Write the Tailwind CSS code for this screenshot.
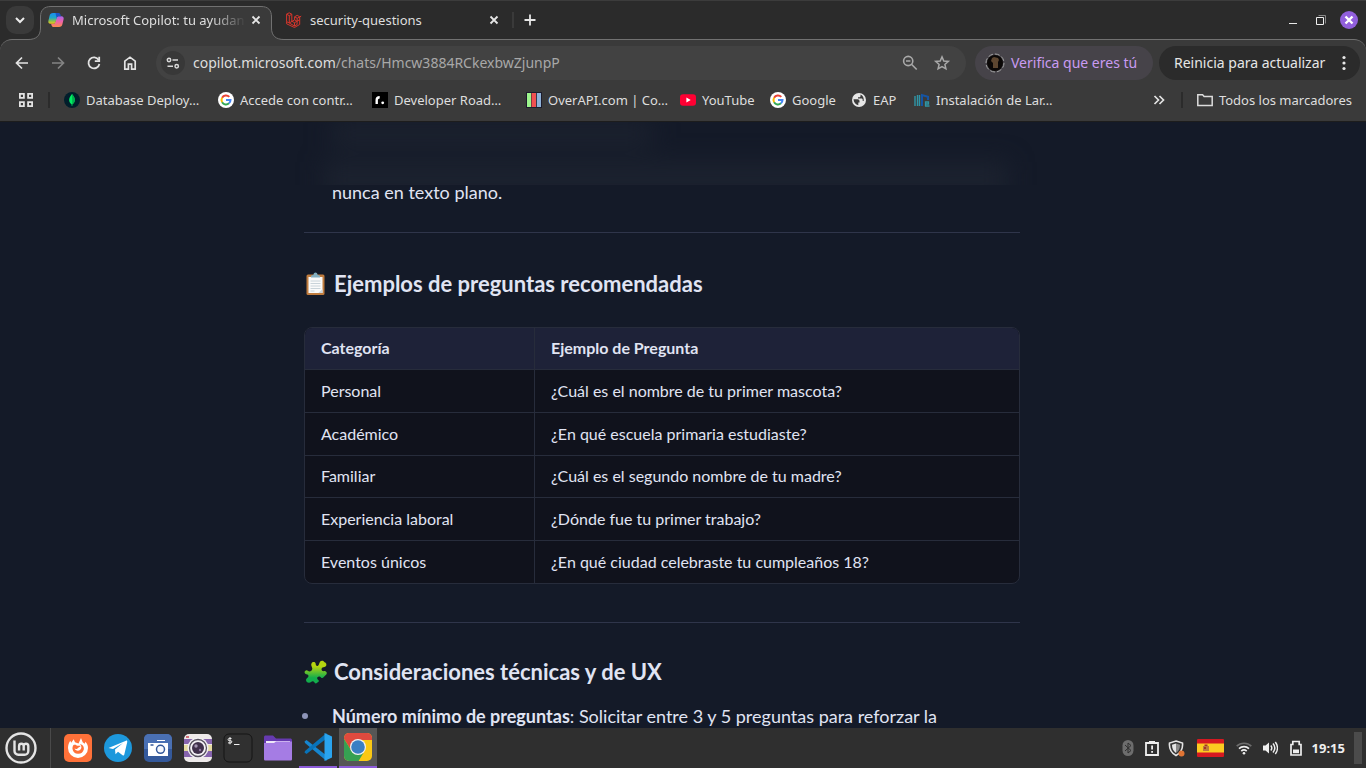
<!DOCTYPE html>
<html lang="es">
<head>
<meta charset="utf-8">
<title>Microsoft Copilot: tu ayudante</title>
<script src="https://cdn.jsdelivr.net/npm/@tailwindcss/browser@4"></script>
</head>
<body class="flex h-screen flex-col overflow-hidden bg-[#141a28] font-['Noto_Sans',sans-serif] text-[13px] leading-5 text-[#dedede]">

<header class="shrink-0 bg-[#2b2b2b]">
  <!-- Tab strip -->
  <div class="relative z-10 flex h-10 items-start border-t border-[#3c3c3c] pr-2">
    <button aria-label="Buscar pestañas" class="mt-[5px] ml-1.5 flex size-7 items-center justify-center rounded-[10px] bg-[#3a3a3a]">
      <svg class="size-4" viewBox="0 0 16 16" fill="none" stroke="#ececec" stroke-width="2"><path d="M4 6l4 4 4-4"/></svg>
    </button>
    <div class="relative ml-1.5 mt-[5px] flex h-[35px] w-[232px] items-center pl-2 pr-2 pb-2">
      <svg class="absolute -left-3 top-0 h-[35px] w-[256px]" viewBox="0 0 256 35" fill="none"><path d="M0 33.500C8 33.500 12.500 30 12.500 22V11C12.500 4 16 .5 23 .5H233C240 .5 243.500 4 243.500 11V22C243.500 30 248 33.500 256 33.500V35H0Z" fill="#3a3a3a"/><path d="M0 33.500C8 33.500 12.500 30 12.500 22V11C12.500 4 16 .5 23 .5H233C240 .5 243.500 4 243.500 11V22C243.500 30 248 33.500 256 33.500" stroke="#717171"/></svg>
      <svg class="relative size-4 shrink-0" viewBox="0 0 16 16">
        <defs>
          <linearGradient id="c1" x1="0" y1="0" x2="0" y2="1"><stop stop-color="#1a8ff0"/><stop offset=".45" stop-color="#20a8c8"/><stop offset=".75" stop-color="#8fc04a"/><stop offset="1" stop-color="#f5c518"/></linearGradient>
          <linearGradient id="c2" x1="0" y1="0" x2="0" y2="1"><stop stop-color="#a565ee"/><stop offset=".5" stop-color="#ee62a8"/><stop offset="1" stop-color="#fb8a4c"/></linearGradient>
        </defs>
        <path d="M11 15H5.500c-1 0-1.600-.6-1.900-1.500l-.5-1.700h2.200c1 0 1.500-.6 1.800-1.600L8.500 6c.4-1.300 1.200-1.800 2.500-1.800h2.500c1.700 0 2.500 1.300 2.100 3.100l-1.200 5C14 14 13 15 11 15z" fill="url(#c2)"/>
        <path d="M5 1h5.500L7.500 10c-.4 1.300-1.200 1.800-2.500 1.800H2.500C.8 11.800 0 10.500.4 8.700l1.200-5C2 2 3 1 5 1z" fill="url(#c1)"/>
        <path d="M7.500 1h3c1 0 1.600.6 1.900 1.500l.5 1.700H11c-1.300 0-2 .5-2.500 1.800z" fill="#1c55c8"/>
      </svg>
      <span class="relative ml-2 w-[174px] whitespace-nowrap mask-r-from-80% mask-r-to-100%">Microsoft Copilot: tu ayudan</span>
      <button aria-label="Cerrar pestaña" class="relative ml-auto size-4 shrink-0"><svg viewBox="0 0 16 16" stroke="#e6e6e6" stroke-width="1.800"><path d="M4.500 4.500l7 7M11.500 4.500l-7 7"/></svg></button>
    </div>
    <div class="mt-[5px] ml-3.5 flex h-7 w-[216px] items-center">
      <svg class="size-4 shrink-0" viewBox="0 0 16 16" fill="none" stroke="#d5362c" stroke-width="1" stroke-linejoin="round"><path d="M.6 2.200L3.200.8l2.600 1.400v7l2.700 1.500 5.200-3V4.800l-2.500-1.500-2.600 1.500v3L3.300 11 .6 9.600zM.6 2.200l2.700 1.500 2.500-1.500M3.300 3.700V11l5.200 3 2.600-1.500V9.300M8.600 4.800l2.600 1.500 4-2.200M11.200 6.300v3M8.500 10.700V14M8.600 7.800l2.600 1.500M.6 9.600v2.200L8.500 15.500l5.200-3v-5"/></svg>
      <span class="ml-2">security-questions</span>
      <button aria-label="Cerrar pestaña" class="ml-auto size-4"><svg viewBox="0 0 16 16" stroke="#e6e6e6" stroke-width="1.800"><path d="M4.500 4.500l7 7M11.500 4.500l-7 7"/></svg></button>
    </div>
    <span class="mt-[11px] ml-2.5 h-4 w-0.5 bg-[#3a3a3a]"></span>
    <button aria-label="Nueva pestaña" class="mt-[11px] ml-2 size-4"><svg viewBox="0 0 16 16" stroke="#e6e6e6" stroke-width="1.800"><path d="M8 2.500v11M2.500 8h11"/></svg></button>
    <div class="mt-2.5 ml-auto flex items-center gap-2.5">
      <button aria-label="Minimizar" class="size-[18px]"><svg viewBox="0 0 18 18"><path d="M5 12.500h8" stroke="#e8e8e8"/></svg></button>
      <button aria-label="Restaurar" class="size-[18px]"><svg viewBox="0 0 18 18" fill="none"><path d="M6.500 4.500h7v8" stroke="#888"/><path d="M4.500 6.500h7v7h-7z" stroke="#eee"/></svg></button>
      <button aria-label="Cerrar" class="size-[18px] rounded-full bg-[#915fdc]"><svg viewBox="0 0 18 18" stroke="#fff" stroke-width="2.400"><path d="M5.500 5.500l7 7M12.500 5.500l-7 7"/></svg></button>
    </div>
  </div>

  <div class="-mt-px rounded-t-xl border-t border-[#717171] bg-[#3a3a3a]">
    <!-- Toolbar -->
    <div class="flex items-center pt-1.5 pr-1.5 pl-3">
      <div class="flex w-36 items-center gap-4">
        <button aria-label="Atrás" class="size-5"><svg viewBox="0 0 20 20" fill="none" stroke="#e3e3e3" stroke-width="1.700"><path d="M16 10H5M10 4.500L4.500 10l5.500 5.500"/></svg></button>
        <button aria-label="Adelante" class="size-5"><svg viewBox="0 0 20 20" fill="none" stroke="#848484" stroke-width="1.700"><path d="M4 10h11M10 4.500l5.500 5.500-5.500 5.500"/></svg></button>
        <button aria-label="Recargar" class="size-5"><svg viewBox="0 0 20 20" fill="none" stroke="#e3e3e3" stroke-width="1.800"><path d="M14.700 7A5.500 5.500 0 1 0 15.400 11"/><path d="M15.200 3.800v4.400h-4.400"/></svg></button>
        <button aria-label="Inicio" class="size-5"><svg viewBox="0 0 20 20" fill="none" stroke="#e3e3e3" stroke-width="1.700"><path d="M4.800 8.200L10 4.200l5.200 4v8h-3.600v-5H8.400v5H4.800z"/></svg></button>
      </div>
      <div class="flex h-[34px] flex-1 items-center rounded-full bg-[#424242] pr-3.5 pl-[5px]">
        <button aria-label="Información del sitio" class="flex size-6 items-center justify-center rounded-full bg-[#383838]"><svg class="size-4" viewBox="0 0 16 16" fill="none" stroke="#dadada" stroke-width="1.500"><circle cx="4" cy="5" r="1.700"/><path d="M7.500 5H13M2.500 11.200H8"/><circle cx="11.700" cy="11.200" r="1.700"/></svg></button>
        <div class="relative ml-2 flex-1 text-sm">
          <div class="pointer-events-none absolute inset-0 whitespace-nowrap" aria-hidden="true"><span class="text-[#dedede]">copilot.microsoft.com</span><span class="text-[#a8a8a8]">/chats/Hmcw3884RCkexbwZjunpP</span></div>
          <input aria-label="Dirección" value="copilot.microsoft.com/chats/Hmcw3884RCkexbwZjunpP" class="block w-full bg-transparent text-transparent outline-none">
        </div>
        <button aria-label="Zoom" class="size-5"><svg viewBox="0 0 20 20" fill="none" stroke="#a9a9a9" stroke-width="1.600"><circle cx="8.200" cy="8" r="4.600"/><path d="M11.700 11.500l5 5M6 8h4.400"/></svg></button>
        <button aria-label="Añadir a marcadores" class="ml-3 size-5"><svg viewBox="0 0 20 20" fill="none" stroke="#a9a9a9" stroke-width="1.500"><path d="M10 3.900l1.800 4.100 4.500.4-3.400 3 1 4.400L10 13.500l-3.900 2.300 1-4.400-3.400-3 4.500-.4z"/></svg></button>
      </div>
      <button class="ml-[9px] flex h-[34px] w-[178px] items-center rounded-full bg-[#464349] pl-2.5 text-sm whitespace-nowrap text-[#c99bf2]">
        <svg class="mr-1.5 size-5 shrink-0" viewBox="0 0 20 20"><circle cx="10" cy="10" r="8" fill="#0b0807"/><path d="M7 5l2-1 4 1 1 2-1 2v6H8v-5L6 8z" fill="#5d4630"/><circle cx="10" cy="10" r="9" fill="none" stroke="#a4a4a4" stroke-dasharray="5 2"/></svg>
        Verifica que eres tú
      </button>
      <button class="ml-1.5 flex h-[34px] w-[201px] items-center justify-between rounded-full bg-[#2b2b2b] pr-3 pl-[15px] text-sm whitespace-nowrap text-[#e6e6e6]">
        Reinicia para actualizar
        <svg class="h-4 w-2" viewBox="0 0 8 16" fill="#e8e8e8"><circle cx="4" cy="2.500" r="1.600"/><circle cx="4" cy="8" r="1.600"/><circle cx="4" cy="13.500" r="1.600"/></svg>
      </button>
    </div>
    <!-- Bookmarks -->
    <nav aria-label="Marcadores" class="flex h-[42px] items-center border-b border-[#1d1d1d] pr-3.5 pb-0.5 pl-[18px] whitespace-nowrap">
      <button aria-label="Aplicaciones" class="size-4"><svg viewBox="0 0 16 16" fill="none" stroke="#e3e3e3" stroke-width="1.800"><path d="M1.900 1.900h4v4h-4zM10.100 1.900h4v4h-4zM1.900 10.100h4v4h-4zM10.100 10.100h4v4h-4z"/></svg></button>
      <span class="ml-3.5 h-4 w-0.5 bg-[#2b2b2b]"></span>
      <a href="#" class="ml-3.5 flex w-[154px] items-center gap-1.5"><svg class="size-4 shrink-0" viewBox="0 0 16 16"><circle cx="8" cy="8" r="8" fill="#011e2b"/><path d="M8 2c4 4.500 3.500 8 .3 10.500V14h-.6v-1.500C4.500 10 4 6.500 8 2z" fill="#00ed64"/><path d="M8 2c4 4.500 3.500 8 .3 10.500z" fill="#00b04c"/></svg>Database Deploy…</a>
      <a href="#" class="flex w-[154px] items-center gap-1.5"><svg class="size-4 shrink-0" viewBox="0 0 16 16"><circle cx="8" cy="8" r="8" fill="#fff"/><g fill="none" stroke-width="2"><path d="M11.300 4.900A4.500 4.500 0 0 0 4.100 5.800" stroke="#ea4335"/><path d="M4.100 5.800a4.500 4.500 0 0 0 0 4.400" stroke="#fbbc05"/><path d="M4.100 10.200a4.500 4.500 0 0 0 6.900 1.100" stroke="#34a853"/><path d="M11 11.300A4.500 4.500 0 0 0 12.500 8H8" stroke="#4285f4"/></g></svg>Accede con contr…</a>
      <a href="#" class="flex w-[154px] items-center gap-1.5"><svg class="size-4 shrink-0" viewBox="0 0 16 16"><path d="M0 0h16v16H0z" fill="#000"/><path d="M4.700 12V8c0-2 1-2.800 3-2.800" fill="none" stroke="#fff" stroke-width="2.400"/><circle cx="10.700" cy="10.800" r="1.400" fill="#fff"/></svg>Developer Road…</a>
      <a href="#" class="flex w-[154px] items-center gap-1.5"><svg class="size-4 shrink-0" viewBox="0 0 16 16"><path d="M0 0h16v16H0z" fill="#1c1c2c"/><path d="M1 1h4v14H1z" fill="#9cf58c"/><path d="M5.500 1h4.500v14H5.500z" fill="#f05050"/><path d="M10.800 1H15v14h-4.200z" fill="#8fb1d8"/></svg>OverAPI.com | Co…</a>
      <a href="#" class="flex w-[90px] items-center gap-1.5"><svg class="size-4 shrink-0" viewBox="0 0 16 16"><rect y="2.300" width="16" height="11.400" rx="3" fill="#ff0033"/><path d="M6.400 5.500v5L10.700 8z" fill="#fff"/></svg>YouTube</a>
      <a href="#" class="flex w-[81px] items-center gap-1.5"><svg class="size-4 shrink-0" viewBox="0 0 16 16"><circle cx="8" cy="8" r="8" fill="#fff"/><g fill="none" stroke-width="2"><path d="M11.300 4.900A4.500 4.500 0 0 0 4.100 5.800" stroke="#ea4335"/><path d="M4.100 5.800a4.500 4.500 0 0 0 0 4.400" stroke="#fbbc05"/><path d="M4.100 10.200a4.500 4.500 0 0 0 6.900 1.100" stroke="#34a853"/><path d="M11 11.300A4.500 4.500 0 0 0 12.500 8H8" stroke="#4285f4"/></g></svg>Google</a>
      <a href="#" class="flex w-[63px] items-center gap-1.5"><svg class="size-4 shrink-0" viewBox="0 0 16 16"><circle cx="8" cy="8" r="7" fill="#e6e6e6"/><path d="M2.500 7.200h4c1.300 0 2 .8 2 2v1.300H7.300v2.700C4.800 12.800 2.700 10.500 2.500 7.200zM9.500 2.600v1.300c0 .8-.6 1.300-1.400 1.300H7v1.300h3.500c.8 0 1.200.6 1.200 1.300v1.300h1c.4-2.900-.7-5.300-3.200-6.500z" fill="#3a3a3a"/></svg>EAP</a>
      <a href="#" class="flex items-center gap-1.5"><svg class="size-4 shrink-0" viewBox="0 0 16 16" fill="none"><path d="M1 4v10M3.500 3v11M5.500 3v11" stroke="#2f95a6" stroke-width="1.400"/><path d="M8 14V3l6 1.800V8" stroke="#1554a4" stroke-width="2"/><path d="M11 14h4.500M11.500 14v-4h3v2h-3" stroke="#2f95a6" stroke-width="1.300"/></svg>Instalación de Lar…</a>
      <button aria-label="Más marcadores" class="ml-auto size-4"><svg viewBox="0 0 16 16" fill="none" stroke="#e3e3e3" stroke-width="1.700"><path d="M3.500 4l4 4-4 4M8.500 4l4 4-4 4"/></svg></button>
      <span class="ml-3.5 h-4 w-0.5 bg-[#2b2b2b]"></span>
      <button class="ml-3.5 flex items-center gap-1.5"><svg class="size-4" viewBox="0 0 16 16" fill="none" stroke="#dcdcdc" stroke-width="1.500"><path d="M.8 13.500V2.800h4.800l1.500 1.700h8.100v9z"/></svg>Todos los marcadores</button>
    </nav>
  </div>
</header>

<!-- Chat -->
<main class="relative min-h-0 flex-1 overflow-hidden bg-[#141a28] pr-[42px] font-['Lato',sans-serif] text-[#e0e4f3]">
  <div class="absolute inset-x-0 top-0 h-[63px] overflow-hidden" aria-hidden="true">
    <div class="mx-auto flex max-w-[758px] flex-col gap-4 pr-[42px] blur-md">
      <div class="ml-7 h-6 w-[320px] bg-[#1c222f]"></div>
      <div class="mr-3 ml-5 h-9 bg-[#1c222f]"></div>
    </div>
  </div>
  <article class="mx-auto max-w-[716px] pt-[56px]">
    <p class="pl-7 text-lg leading-7">nunca en texto plano.</p>
    <hr class="mt-[26px] border-[#2f354a]">
    <h3 class="mt-[35px] flex items-center gap-1.5 text-[22px] leading-8 font-bold">
      <svg class="size-6" viewBox="0 0 24 24"><rect x="2.500" y="2.500" width="18" height="20.500" rx="1.500" fill="#c07c3e"/><path d="M4.500 5h14v16h-14z" fill="#fafafa"/><path d="M18.500 17v4h-4z" fill="#cdd6dc"/><path d="M6.500 9h10M6.500 11.500h10M6.500 14h10M6.500 16.500h10M6.500 19h4" stroke="#bcc9d0" stroke-width=".8"/><path d="M7 5.500V3.800l2.500-1C9.700-.2 13.300-.2 13.500 2.800l2.500 1v1.700z" fill="#82aec0"/></svg>
      Ejemplos de preguntas recomendadas
    </h3>
    <div class="mt-[27px] overflow-hidden rounded-lg border border-[#272c3b] bg-[#10121c]">
      <table class="w-full table-fixed border-separate border-spacing-0 text-left text-base leading-5 [&_td]:border-[#272c3b] [&_td]:px-4 [&_td]:py-[11px] [&_td:first-child]:border-r [&_th]:border-[#272c3b] [&_tr:not(:last-child)>td]:border-b">
        <thead class="bg-[#1e2238]">
          <tr><th scope="col" class="h-[42px] w-[230px] border-r border-b px-4 pb-0.5 font-bold">Categoría</th><th scope="col" class="border-b px-4 pb-0.5 font-bold">Ejemplo de Pregunta</th></tr>
        </thead>
        <tbody>
          <tr><td>Personal</td><td>¿Cuál es el nombre de tu primer mascota?</td></tr>
          <tr><td>Académico</td><td>¿En qué escuela primaria estudiaste?</td></tr>
          <tr class="[&>td]:pt-2.5!"><td>Familiar</td><td>¿Cuál es el segundo nombre de tu madre?</td></tr>
          <tr><td>Experiencia laboral</td><td>¿Dónde fue tu primer trabajo?</td></tr>
          <tr><td>Eventos únicos</td><td>¿En qué ciudad celebraste tu cumpleaños 18?</td></tr>
        </tbody>
      </table>
    </div>
    <hr class="mt-[38px] border-[#2f354a]">
    <h3 class="mt-[33px] flex items-center gap-1.5 text-[22px] leading-8 font-bold">
      <svg class="size-6" viewBox="0 0 24 24"><defs><linearGradient id="pz" x1="0" y1="0" x2="0" y2="1"><stop offset=".25" stop-color="#b4d410"/><stop offset=".75" stop-color="#12ad4c"/></linearGradient></defs><path d="M7.500 3.500c.8-2 4-2 4.200.3 0 1.700 1 2.700 2.300 1.900 1.200-.7 1-2.500 2-4 1.500-1.800 4-1 4.500.6 2 .5 2.500 3 1 4.300-1.300 1-3 .6-3.700 1.600-.8 1.300.2 3 1.700 3 2-1 4 1 3 3l-3.500 3.500c-1.500 1-2-.5-3-1-2-.8-3.500 1-2.500 2.500 1 1 2 1.500 1 2.500L12 23.500c-1.500 0-1.500-2-3-2.300s-2 1.500-4 1.500c-2 0-3.300-1.500-2.900-3.300.5-1.700 2.400-1.700 2.400-3.400S2.500 14.500 1.300 13.700c-1.300-1-.8-3 .7-3.300 1.500-.3 2 1 3.500 1s3.200-1.500 2.700-3.300C7.800 6.500 6.700 5.500 7.500 3.500z" fill="url(#pz)"/></svg>
      Consideraciones técnicas y de UX
    </h3>
    <ul class="mt-3.5 text-lg leading-7">
      <li class="flex items-center"><span class="mr-6 -ml-0.5 size-1.5 rounded-full bg-[#8d94b8]"></span><span><strong class="font-bold">Número mínimo de preguntas</strong>: Solicitar entre 3 y 5 preguntas para reforzar la</span></li>
    </ul>
  </article>
</main>

<!-- Desktop panel -->
<footer class="flex h-10 shrink-0 items-center bg-[#2f2f2f] pr-1 pl-[5px]">
  <button aria-label="Menú" class="size-8"><svg viewBox="0 0 32 32" fill="none" stroke="#e4e4e4"><circle cx="16" cy="16" r="14.500" fill="#3a3a3a" stroke-width="2.400"/><path d="M9.500 8.500v10.500a3.800 3.800 0 0 0 3.800 3.800h6.200a3.800 3.800 0 0 0 3.800-3.800v-5a2.300 2.300 0 0 0-4.600 0v4.500M18.700 14a2.300 2.300 0 0 0-4.600 0v4.500" stroke-width="2.400"/></svg></button>
  <span class="ml-[13px] h-full w-px bg-[#4a4a4a]"></span>
  <div class="ml-2 flex h-full gap-0.5 [&_svg]:size-[30px] [&>button]:flex [&>button]:h-full [&>button]:w-[38px] [&>button]:items-center [&>button]:justify-center">
    <button aria-label="Firefox"><svg viewBox="0 0 30 30"><rect x="1" y="1" width="28" height="28" rx="5" fill="#ff7139"/><path d="M5 15c0-2.800.9-5.300 2.300-7.200l.9 2 2.500-3.500 1.300 3 3.500 1.200 2.500-5.500 1.700 4.300 2 1.500.7-2C24.300 10.700 25 12.700 25 15A10 10 0 0 1 5 15z" fill="#fff"/><path d="M10.500 12c1.500-.7 3 0 3.500.7 1 .2 3.300-.3 3.500.3 0 .8-1.800 1.500-2.600 2-.6 1.300-2.600 1-3.400.5.800 2 3.500 3 5.500 1.500 2.300-1.800 1.500-4.500-.2-6 3 .3 4.500 3 4 5.500a5.800 5.800 0 0 1-11.300-.5c-.2-1.500.3-3 1-4z" fill="#ff7139"/></svg></button>
    <button aria-label="Telegram"><svg viewBox="0 0 30 30"><circle cx="15" cy="15" r="14" fill="#1d98dc"/><path d="M5.500 15L23 7.700c.8-.3 1.500.2 1.200 1.500L21.300 21.500c-.2 1-.9 1.200-1.700.7L15 18.800l-2.500 2.500-.5-4.700 8-6.500-10 6z" fill="#fff"/></svg></button>
    <button aria-label="Captura de pantalla"><svg viewBox="0 0 30 30"><rect x="1" y="1" width="28" height="28" rx="5" fill="#34599b"/><path d="M1 6a5 5 0 0 1 5-5h18a5 5 0 0 1 5 5v10H1z" fill="#4a70b3"/><path d="M5 10h20v13H5zM14 7h8v1h-8z" fill="#fff"/><circle cx="17.500" cy="16.300" r="4" fill="#f6f8fc" stroke="#34599b" stroke-width="1.500"/><path d="M7.500 12h3" stroke="#34599b" stroke-width="1.500"/></svg></button>
    <button aria-label="Cámara"><svg viewBox="0 0 30 30"><rect x="1" y="1" width="28" height="28" rx="5" fill="#eeeaea"/><path d="M1 6h28v5H1zM1 18h28v6H1z" fill="#8664ad"/><path d="M1 12h28v6H1z" fill="#e5dba0"/><circle cx="15" cy="15" r="10.500" fill="#f3f1f4"/><circle cx="15" cy="15" r="8.500" fill="none" stroke="#55505d" stroke-width="1.300"/><circle cx="15" cy="15" r="6" fill="#40314b"/><circle cx="13" cy="13" r="1.700" fill="#a294b0"/><circle cx="17" cy="17" r="1.200" fill="#8d729d"/><path d="M3 3h3v2H3z" fill="#ce6f75"/></svg></button>
    <button aria-label="Terminal"><svg viewBox="0 0 30 30"><rect x="1" y="1" width="28" height="28" rx="5" fill="#303030" stroke="#151515"/><path d="M8.500 5.500H6.200a1 1 0 0 0 0 2.200h1.500a1 1 0 0 1 0 2.200H5M7 4v7.300M11 11.500h5.500" fill="none" stroke="#f0f0f0"/></svg></button>
    <button aria-label="Archivos"><svg viewBox="0 0 30 30"><path d="M1 4.500C1 3 1.500 2.500 3 2.500h7l3 3h14c1.500 0 2 .5 2 2V14H1z" fill="#663ab0"/><path d="M3 8h24v4H3z" fill="#eee8f8"/><path d="M1 10h10l2-1.500h16V26c0 1-.5 1.500-1.500 1.500h-25C1.500 27.500 1 27 1 26z" fill="#a57ce4"/></svg></button>
    <button aria-label="Visual Studio Code" class="border-b-2 border-[#8c5bd8]"><svg viewBox="0 0 30 30"><path d="M1.500 9.500L3.500 8l20 15.500V29L2 11z" fill="#1686cf"/><path d="M1.500 20.500L3.500 22l20-15.500V1L2 19z" fill="#0873b9"/><path d="M21.500 1L29 4.500v21L21.500 29z" fill="#2aa4ee"/></svg></button>
    <button aria-label="Google Chrome" class="border-b-2 border-[#8c5bd8] bg-[#565656]"><svg viewBox="0 0 30 30"><defs><clipPath id="cr"><rect x="1" y="1" width="28" height="28" rx="5"/></clipPath></defs><g clip-path="url(#cr)"><path d="M0 0h30v30H0z" fill="#fac814"/><path d="M0 0h30v8H15L8 18 0 5z" fill="#df4a3e"/><path d="M0 5l8.500 14L15 22l6-2-6 10H0z" fill="#36a052"/></g><circle cx="15" cy="15" r="8" fill="#f2f2f2"/><circle cx="15" cy="15" r="6.800" fill="#3a7fc4"/></svg></button>
  </div>
  <div class="ml-auto flex h-full items-center">
    <svg class="h-4 w-3" viewBox="0 0 12 16"><rect x=".5" width="11" height="16" rx="5.500" fill="#6d6d6d"/><path d="M3 5l6 5.500L6 13V3l3 2.500L3 11" fill="none" stroke="#2f2f2f"/></svg>
    <svg class="ml-2.5 size-4" viewBox="0 0 16 16"><path d="M2 3h12v12H2z" fill="none" stroke="#eee" stroke-width="1.800"/><path d="M5 1h6v3H5zM7.200 5.500h1.800v4H7.200zM7.200 11h1.800v1.800H7.200z" fill="#eee"/></svg>
    <svg class="ml-2 size-[17px]" viewBox="0 0 17 17"><path d="M8 1l6.500 2c.5 5-1 9.500-6.500 12.500C2.500 12.500 1 8 1.500 3z" fill="#333" stroke="#e4e4e4" stroke-width="1.600"/><path d="M8 3.500v9.500C5 11 4 8 4 4.700z" fill="#e4e4e4"/><path d="M8 3.500v9.500c3-2 4-5 4-8.300z" fill="#888"/><circle cx="13.500" cy="13.500" r="3" fill="#e07434"/></svg>
    <svg class="ml-3 h-[18px] w-[27px]" viewBox="0 0 27 18"><rect width="27" height="18" rx="1" fill="#d51921"/><path d="M0 4.500h27v9H0z" fill="#fbcb21"/><path d="M6 7h6v5H6z" fill="#bd7a3c"/><path d="M7.500 5.500h3V7h-3zM7 8h2v2H7z" fill="#a53429"/></svg>
    <svg class="ml-3 size-4" viewBox="0 0 16 16" fill="none" stroke-width="1.700"><path d="M.7 6.200a10.500 10.500 0 0 1 14.600 0" stroke="#6d6d6d"/><path d="M3 8.700a7.200 7.200 0 0 1 10 0M5.300 11.200a4 4 0 0 1 5.400 0" stroke="#eee"/><circle cx="8" cy="13.300" r="1.300" fill="#eee"/></svg>
    <svg class="ml-2.5 size-4" viewBox="0 0 16 16" fill="none" stroke="#eee" stroke-width="1.500"><path d="M1 5.500h2.500L7 2.500v11l-3.500-3H1z" fill="#eee" stroke="none"/><path d="M8.800 5.500c1.200 1.500 1.200 3.500 0 5M11 3.500c2.200 2.700 2.200 6.300 0 9M13.300 2c2.800 3.600 2.800 8.400 0 12"/></svg>
    <svg class="ml-3 h-4 w-3" viewBox="0 0 12 16"><path d="M1 4.500h1.800V1.500h6.400v3H11V15H1z" fill="none" stroke="#eee" stroke-width="1.700"/><path d="M3 9.500h6v3.700H3z" fill="#eee"/></svg>
    <time class="ml-2.5 font-bold text-[#eee]">19:15</time>
    <span class="ml-[9px] h-8 w-2 bg-[#4b4b4b]"></span>
  </div>
</footer>
</body>
</html>
